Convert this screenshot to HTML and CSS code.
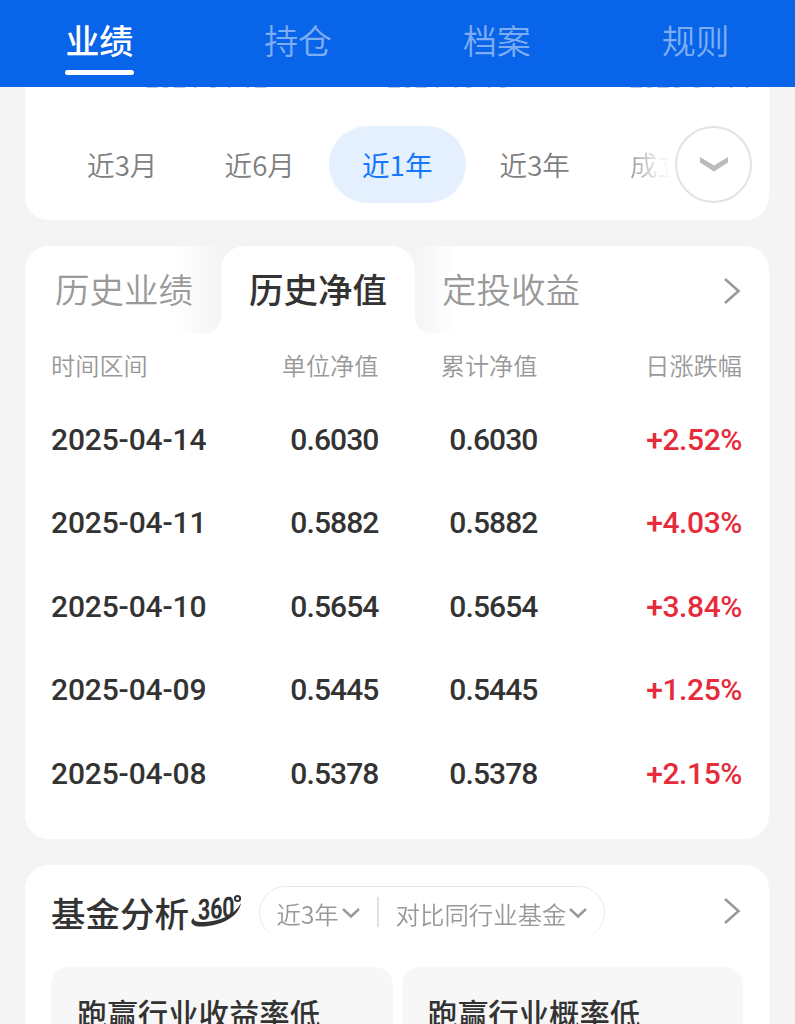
FILE: index.html
```
<!DOCTYPE html>
<html lang="zh-CN">
<head>
    <meta charset="UTF-8">
    <meta name="viewport" content="width=device-width, initial-scale=1.0">
    <title>基金业绩</title>
    <link rel="stylesheet" href="styles.css">
</head>
<body>
    <div class="page">
        <nav class="top-nav">
            <div class="nav-item active"><span>业绩</span></div>
            <div class="nav-item"><span>持仓</span></div>
            <div class="nav-item"><span>档案</span></div>
            <div class="nav-item"><span>规则</span></div>
        </nav>

        <section class="card chart-card">
            <div class="chart-dates">
                <span>2024-04-12</span>
                <span>2024-10-15</span>
                <span>2025-04-14</span>
            </div>
            <div class="ranges">
                <div class="range">近3月</div>
                <div class="range">近6月</div>
                <div class="range active">近1年</div>
                <div class="range">近3年</div>
                <div class="range last">成立来</div>
                <button class="more-button">
                    <svg width="28" height="15" viewBox="0 0 28 15"><path d="M0 0L14 8.5L28 0V5.5L14 14.5L0 5.5Z" fill="#bbb"/></svg>
                </button>
            </div>
        </section>

        <section class="card history-card">
            <div class="history-tabs">
                <div class="history-tab left">历史业绩</div>
                <div class="history-tab active"><span>历史净值</span></div>
                <div class="history-tab right">定投收益</div>
                <svg class="arrow" width="18" height="28" viewBox="0 0 18 28"><path d="M2 2L15.5 14L2 26" fill="none" stroke="#999" stroke-width="2.6"/></svg>
            </div>
            <div class="row head">
                <span>时间区间</span><span>单位净值</span><span>累计净值</span><span>日涨跌幅</span>
            </div>
            <div class="row">
                <span class="date">2025-04-14</span><span>0.6030</span><span>0.6030</span><span class="up">+2.52%</span>
            </div>
            <div class="row">
                <span class="date">2025-04-11</span><span>0.5882</span><span>0.5882</span><span class="up">+4.03%</span>
            </div>
            <div class="row">
                <span class="date">2025-04-10</span><span>0.5654</span><span>0.5654</span><span class="up">+3.84%</span>
            </div>
            <div class="row">
                <span class="date">2025-04-09</span><span>0.5445</span><span>0.5445</span><span class="up">+1.25%</span>
            </div>
            <div class="row">
                <span class="date">2025-04-08</span><span>0.5378</span><span>0.5378</span><span class="up">+2.15%</span>
            </div>
        </section>

        <section class="card analysis-card">
            <div class="analysis-head">
                <h2>基金分析</h2>
                <svg class="logo-360" width="52" height="34" viewBox="0 0 52 34">
                    <path d="M3 24C-2 27 0 32.5 10 32.5C29 32.5 48 23 50 9C43 22 28 27 13 28C6 28.5 2 27 3 24Z" fill="#333"/>
                    <text class="logo-text" transform="translate(7 26) skewX(-5) rotate(-5) scale(0.73 1)">360</text>
                    <circle cx="46.5" cy="4.5" r="2.6" fill="none" stroke="#333" stroke-width="2"/>
                </svg>
                <div class="filter">
                    <span>近3年</span>
                    <svg width="18" height="12" viewBox="0 0 18 12"><path d="M1 2L9 9.5L17 2" fill="none" stroke="#999" stroke-width="2.4"/></svg>
                    <i class="divider"></i>
                    <span>对比同行业基金</span>
                    <svg width="18" height="12" viewBox="0 0 18 12"><path d="M1 2L9 9.5L17 2" fill="none" stroke="#999" stroke-width="2.4"/></svg>
                </div>
                <svg class="arrow" width="18" height="28" viewBox="0 0 18 28"><path d="M2 2L15.5 14L2 26" fill="none" stroke="#999" stroke-width="2.6"/></svg>
            </div>
            <div class="boxes">
                <div class="box">跑赢行业收益率低</div>
                <div class="box">跑赢行业概率低</div>
            </div>
        </section>
    </div>
</body>
</html>
```
FILE: styles.css
```
* {
    box-sizing: border-box;
}
body {
    margin: 0;
    background-color: #f4f4f4;
    font-family: "Noto Sans CJK SC", sans-serif;
    color: #333;
}
.page {
    height: 1024px;
    overflow: hidden;
}
.top-nav {
    display: flex;
    height: 87px;
    background-color: #0864e8;
}
.nav-item {
    flex: 1;
    display: flex;
    flex-direction: column;
    align-items: center;
    padding-top: 15px;
    font-size: 34px;
    font-weight: 350;
    line-height: 50px;
    color: #7eadf3;
}
.nav-item.active {
    font-weight: 500;
    color: white;
}
.nav-item.active::after {
    content: "";
    width: 69px;
    height: 5px;
    margin-top: 5px;
    border-radius: 3px;
    background-color: white;
}
.card {
    margin: 0 26px 26px 25px;
    border-radius: 24px;
    background-color: white;
}
.chart-card {
    height: 133px;
    border-radius: 0 0 24px 24px;
}
.chart-dates {
    display: flex;
    justify-content: space-between;
    align-items: flex-end;
    height: 3px;
    padding: 0 18px 0 120px;
    overflow: hidden;
    font-family: Roboto, sans-serif;
    font-size: 24.2px;
    line-height: 19px;
    color: #b9c6e6;
}
.ranges {
    display: flex;
    align-items: center;
    height: 77px;
    margin-top: 36px;
    padding-left: 28.5px;
}
.range {
    width: 137.5px;
    flex: none;
    padding-bottom: 1px;
    text-align: center;
    font-size: 27.6px;
    font-weight: 350;
    line-height: 76px;
    color: #808080;
}
.range.active {
    border-radius: 39px;
    background-color: #e5f0ff;
    font-weight: 400;
    color: #1677ff;
}
.range.last {
    width: 46px;
    margin-left: 26.5px;
    overflow: hidden;
    white-space: nowrap;
    text-align: left;
    background: linear-gradient(90deg, #999, #ddd 50%, #fff 90%);
    background-clip: text;
    -webkit-background-clip: text;
    color: transparent;
}
.more-button {
    display: flex;
    align-items: center;
    justify-content: center;
    width: 77px;
    height: 77px;
    margin-left: -1px;
    padding: 0;
    flex: none;
    border: 2px solid #e3e3e3;
    border-radius: 50%;
    background-color: white;
}
.history-card {
    height: 593px;
}
.history-tabs {
    display: flex;
    height: 87px;
    font-size: 34.5px;
    line-height: 85px;
}
.history-tab {
    font-weight: 350;
    color: #999;
}
.history-tab.left {
    width: 196px;
    padding-left: 30px;
    border-radius: 24px 0 16px 0;
    background: linear-gradient(90deg, transparent 150px, #f4f4f4);
}
.history-tab.active {
    width: 194px;
    text-align: center;
    font-weight: 500;
    color: #333;
    background: linear-gradient(#f4f4f4 24px, white 24px);
}
.history-tab.active span {
    display: block;
    height: 87px;
    border-radius: 24px 24px 0 0;
    background-color: white;
}
.history-tab.right {
    flex: 1;
    padding-left: 27px;
    border-radius: 0 0 0 16px;
    background: linear-gradient(90deg, #f4f4f4, transparent 40px);
}
.history-tabs .arrow {
    margin: 31px 28px 0 0;
}
.row {
    display: grid;
    grid-template-columns: 195px 132.5px 159px 204.5px;
    align-items: center;
    height: 83.5px;
    padding-left: 26px;
    text-align: right;
    font-family: Roboto, sans-serif;
    font-size: 30px;
    font-weight: 500;
    letter-spacing: -0.9px;
}
.row span:first-child {
    text-align: left;
}
.row .date {
    letter-spacing: -0.15px;
}
.row .up {
    color: #e62c3b;
    letter-spacing: -0.4px;
}
.row.head {
    height: 62px;
    margin-bottom: 2.3px;
    font-family: "Noto Sans CJK SC", sans-serif;
    font-size: 24.2px;
    font-weight: 350;
    letter-spacing: 0;
    color: #999;
}
.analysis-card {
    height: 200px;
    padding: 0 26px;
}
.analysis-head {
    display: flex;
    align-items: center;
    height: 102px;
    padding-bottom: 8px;
}
.analysis-head h2 {
    margin: -1px 0 0;
    font-size: 34.5px;
    font-weight: 500;
}
.logo-360 {
    margin: -2px 0 0 2px;
}
.logo-text {
    font-family: Roboto, sans-serif;
    font-size: 29px;
    font-weight: 700;
    fill: #333;
}
.filter {
    display: flex;
    align-items: center;
    height: 53px;
    margin-left: 15.5px;
    padding: 2px 17px 0;
    border: 1px solid #e6e6e6;
    border-radius: 27px;
    font-size: 24.4px;
    font-weight: 350;
    color: #999;
    mask-image: linear-gradient(#000 80%, transparent);
}
.filter svg {
    margin-left: 3px;
}
.divider {
    width: 2px;
    height: 30px;
    margin: -3px 17px 0;
    background-color: #e0e0e0;
}
.analysis-head .arrow {
    margin: -3px 2px 0 auto;
}
.boxes {
    display: flex;
    gap: 9px;
}
.box {
    flex: 1;
    height: 120px;
    padding: 24px 26px;
    border-radius: 18px;
    background-color: #f7f7f7;
    font-size: 30.4px;
    font-weight: 500;
    line-height: 44px;
    white-space: nowrap;
}
```
